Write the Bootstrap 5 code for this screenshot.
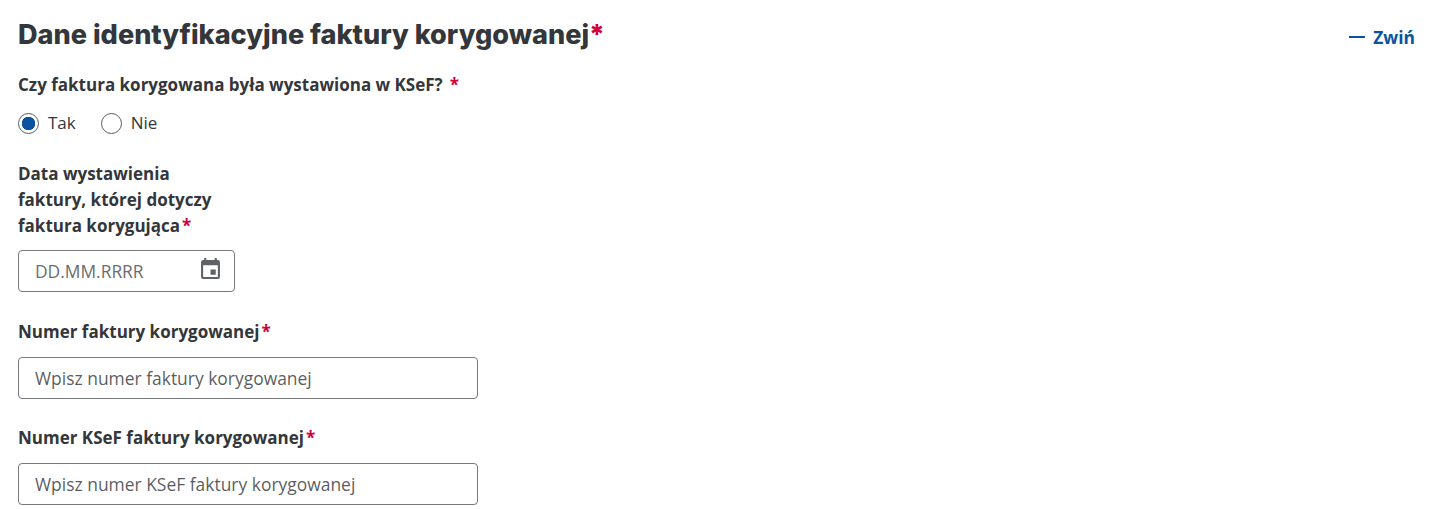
<!DOCTYPE html>
<html lang="pl">
<head>
<meta charset="utf-8">
<title>Dane identyfikacyjne</title>
<link href="https://cdn.jsdelivr.net/npm/bootstrap@5.3.0/dist/css/bootstrap.min.css" rel="stylesheet">
<style>
body{font-family:"Open Sans",sans-serif;color:#33363a;background:#fff;overflow:hidden}
.sheet{padding:16px 25px 0 18px}
.sec-title{font-family:Inter,sans-serif;font-weight:800;font-size:27.1px;line-height:38px;color:#33363a;margin:0}
.req{color:#d4003c}
.req-gap{margin-left:2px}
.fold{color:#0b52a0;font-weight:700;font-size:17.4px;line-height:22px;text-decoration:none;margin-top:10px;gap:8px}
.fold-dash{width:16px;height:2px;background:#0b52a0}
.lab{font-weight:700;font-size:17px;line-height:26px;color:#33363a;margin:0}
.q-lab{margin-top:18px}
.q-star{margin-left:7px}
.opt{font-size:17px;line-height:22px;margin-top:14px}
.opt .form-check-input{width:21px;height:21px;margin:0;border:1px solid #555b62;background-color:#fff}
.opt .form-check-input:checked{background-color:#fff;border-color:#555b62;background-image:radial-gradient(circle,#0b52a0 0,#0b52a0 6.4px,transparent 7px)}
.opt-item{gap:9px}
.opt-item:first-child{margin-right:25px}
.date-wrap{width:217px;margin-top:11px}
.date-field{height:42px;border:1px solid #77797c;border-radius:4px;padding:0 14px 0 16px}
.date-field input{border:0;outline:0;padding:0;width:130px;font-size:17.4px;color:#33363a}
.date-ico{margin-bottom:5px}
.txt{width:460px;height:42px;border:1px solid #77797c;border-radius:4px;padding:0 16px;font-size:17.45px;color:#33363a;box-shadow:none}
input::placeholder{color:#6a6d70;opacity:1}
.date-lab{margin-top:27px}
.f-lab{margin-top:26px;margin-bottom:12px}
.f-first{margin-top:27px}
</style>
</head>
<body>
<main class="sheet">
  <div class="d-flex justify-content-between align-items-start">
    <h2 class="sec-title">Dane identyfikacyjne faktury korygowanej<span class="req">*</span></h2>
    <a href="#" class="fold d-flex align-items-center"><span class="fold-dash"></span>Zwiń</a>
  </div>
  <p class="lab q-lab">Czy faktura korygowana była wystawiona w KSeF?<span class="req q-star">*</span></p>
  <div class="opt d-flex align-items-center">
    <div class="opt-item d-flex align-items-center">
      <input class="form-check-input" type="radio" name="ksef" id="tak" checked>
      <label for="tak">Tak</label>
    </div>
    <div class="opt-item d-flex align-items-center">
      <input class="form-check-input" type="radio" name="ksef" id="nie">
      <label for="nie">Nie</label>
    </div>
  </div>
  <label class="lab date-lab d-block" for="dt">Data wystawienia<br>faktury, której dotyczy<br>faktura korygująca<span class="req req-gap">*</span></label>
  <div class="date-wrap">
    <div class="date-field d-flex align-items-center justify-content-between">
      <input id="dt" type="text" placeholder="DD.MM.RRRR">
      <svg class="date-ico" width="19" height="21" viewBox="3 1 18 20" fill="#5f6368" aria-hidden="true"><path d="M17 12h-5v5h5v-5zM16 1v2H8V1H6v2H5a2 2 0 0 0-2 2v14a2 2 0 0 0 2 2h14a2 2 0 0 0 2-2V5a2 2 0 0 0-2-2h-1V1h-2zm3 18H5V8h14v11z"/></svg>
    </div>
  </div>
  <label class="lab f-lab f-first d-block" for="nr">Numer faktury korygowanej<span class="req req-gap">*</span></label>
  <input id="nr" class="form-control txt" type="text" placeholder="Wpisz numer faktury korygowanej">
  <label class="lab f-lab d-block" for="ks">Numer KSeF faktury korygowanej<span class="req req-gap">*</span></label>
  <input id="ks" class="form-control txt" type="text" placeholder="Wpisz numer KSeF faktury korygowanej">
</main>
<script src="https://cdn.jsdelivr.net/npm/bootstrap@5.3.0/dist/js/bootstrap.bundle.min.js"></script>
</body>
</html>
